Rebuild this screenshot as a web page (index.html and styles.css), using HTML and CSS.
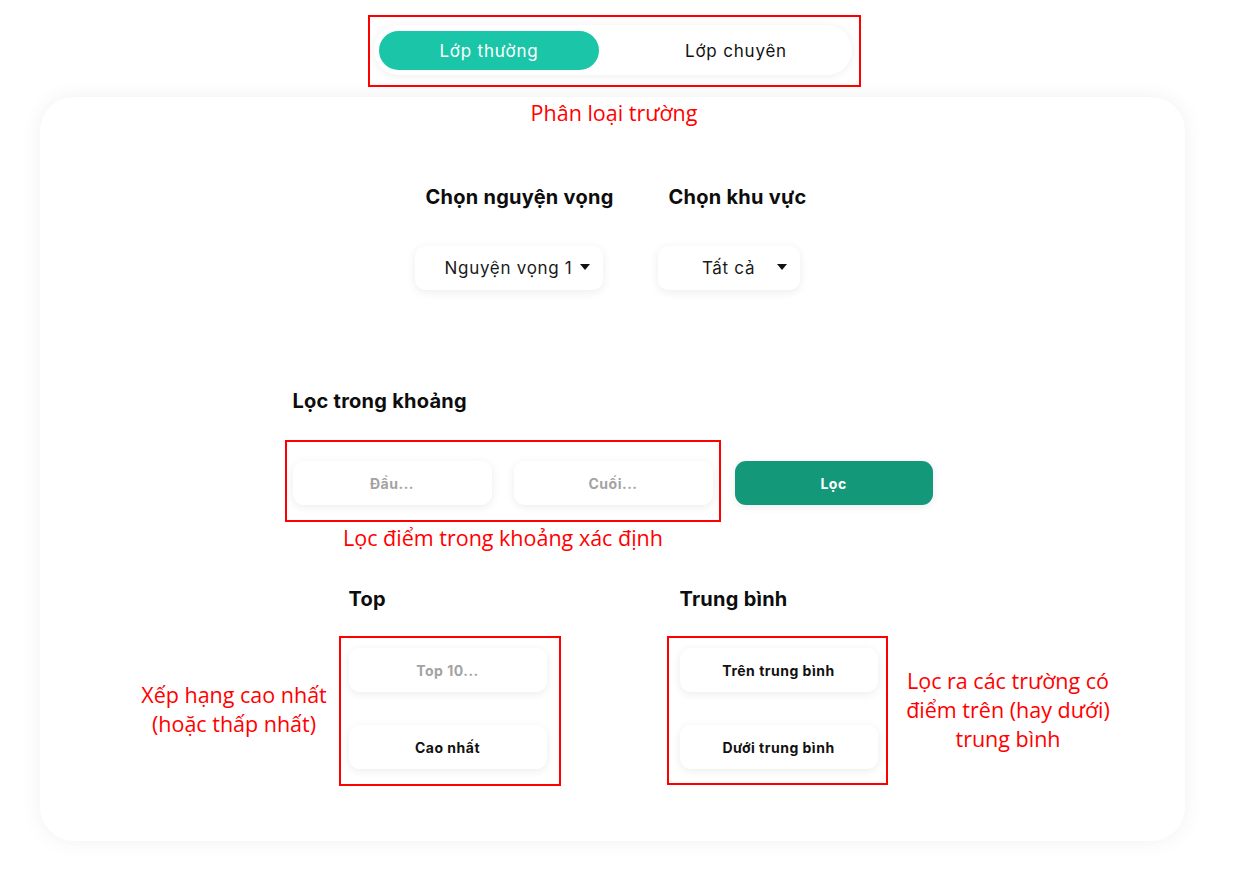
FILE: index.html
```html
<!DOCTYPE html>
<html lang="vi">
<head>
<meta charset="utf-8">
<title>Lọc trường</title>
<link rel="stylesheet" href="styles.css">
</head>
<body>
<div class="page">
  <div class="toggle-wrap">
    <div class="toggle">
      <button class="tab tab-active">Lớp thường</button>
      <button class="tab">Lớp chuyên</button>
    </div>
  </div>

  <div class="card">
    <div class="selects">
      <div class="field">
        <h3 class="title title-indent">Chọn nguyện vọng</h3>
        <div class="select select-wide"><span>Nguyện vọng 1</span><i class="caret"></i></div>
      </div>
      <div class="field">
        <h3 class="title title-indent">Chọn khu vực</h3>
        <div class="select select-narrow"><span>Tất cả</span><i class="caret"></i></div>
      </div>
    </div>

    <div class="range">
      <h3 class="title">Lọc trong khoảng</h3>
      <div class="range-row">
        <div class="box box-ph">Đầu...</div>
        <div class="box box-ph">Cuối...</div>
        <button class="box btn-green">Lọc</button>
      </div>
    </div>

    <div class="groups">
      <div class="group">
        <h3 class="title">Top</h3>
        <div class="box box-ph">Top 10...</div>
        <button class="box box-btn">Cao nhất</button>
      </div>
      <div class="group">
        <h3 class="title">Trung bình</h3>
        <button class="box box-btn">Trên trung bình</button>
        <button class="box box-btn">Dưới trung bình</button>
      </div>
    </div>
  </div>

  <div class="mark mark-toggle"></div>
  <div class="note note-toggle">Phân loại trường</div>
  <div class="mark mark-range"></div>
  <div class="note note-range">Lọc điểm trong khoảng xác định</div>
  <div class="mark mark-top"></div>
  <div class="note note-top">Xếp hạng cao nhất<br>(hoặc thấp nhất)</div>
  <div class="mark mark-avg"></div>
  <div class="note note-avg">Lọc ra các trường có<br>điểm trên (hay dưới)<br>trung bình</div>
</div>
</body>
</html>
```

FILE: styles.css
```css
* { box-sizing: border-box; }
html, body { margin: 0; padding: 0; background: #fff; }
body { font-family: Inter, "Noto Sans", sans-serif; color: #111; }

.page {
  position: relative;
  width: 1238px;
  min-height: 877px;
  padding-top: 25px;
}

.toggle-wrap { display: flex; justify-content: center; padding-right: 12px; }
.toggle {
  width: 478px;
  height: 50px;
  padding: 6px 6px 5px 5px;
  border-radius: 25px;
  background: #fff;
  box-shadow: 0 1px 10px rgba(0,0,0,0.07);
  display: flex;
  justify-content: space-between;
  align-items: center;
}
.tab {
  width: 220px;
  height: 39px;
  border: 0;
  border-radius: 20px;
  background: transparent;
  font-family: Inter, "Noto Sans", sans-serif;
  font-size: 17px;
  letter-spacing: 0.8px;
  color: #111;
  padding: 0;
  cursor: pointer;
}
.tab-active { background: #1bc6a8; color: #fff; }

.card {
  margin: 22px 53px 0 40px;
  height: 744px;
  border-radius: 34px;
  background: #fff;
  box-shadow: 0 0 22px rgba(0,0,0,0.06);
  padding-top: 88px;
  display: flex;
  flex-direction: column;
  align-items: center;
}

.title {
  margin: 0;
  font-size: 20px;
  line-height: 24px;
  letter-spacing: 0.25px;
  font-weight: 700;
  color: #0d0d0d;
}
.title-indent { padding-left: 11px; }

.selects { display: flex; gap: 44px; padding-right: 4px; }
.field { display: flex; flex-direction: column; gap: 37px; }
.select {
  position: relative;
  height: 44px;
  border-radius: 10px;
  background: #fff;
  box-shadow: 0 2px 10px rgba(0,0,0,0.08);
  display: flex;
  align-items: center;
  justify-content: center;
  font-size: 17px;
  letter-spacing: 0.7px;
  color: #1a1a1a;
}
.select-wide { width: 188px; }
.select-narrow { width: 142px; }
.caret {
  position: absolute;
  right: 13px;
  top: 18px;
  width: 0; height: 0;
  border-left: 5px solid transparent;
  border-right: 5px solid transparent;
  border-top: 6px solid #111;
}

.range { margin-top: 99px; display: flex; flex-direction: column; gap: 48px; }
.range-row { display: flex; gap: 22px; }
.range-row .box { width: 199px; }
.range-row .btn-green { width: 198px; }

.box {
  height: 44px;
  border: 0;
  border-radius: 11px;
  background: #fff;
  box-shadow: 0 2px 10px rgba(0,0,0,0.08);
  display: flex;
  align-items: center;
  justify-content: center;
  font-family: Inter, "Noto Sans", sans-serif;
  font-size: 14px;
  letter-spacing: 0.5px;
  font-weight: 700;
  color: #111;
  padding: 0;
}
.box-ph { color: #a3a3a3; }
.btn-green { background: #13997a; color: #fff; box-shadow: 0 2px 8px rgba(0,0,0,0.08); }

.groups { margin-top: 82px; display: flex; gap: 133px; padding-left: 1px; }
.group { width: 198px; display: flex; flex-direction: column; }
.group .title { margin-bottom: 37px; }
.group .box + .box { margin-top: 33px; }

.mark { position: absolute; border: 2px solid #f00; }
.mark-toggle { left: 368px; top: 15px; width: 493px; height: 72px; }
.mark-range { left: 285px; top: 440px; width: 436px; height: 82px; }
.mark-top { left: 339px; top: 636px; width: 222px; height: 150px; }
.mark-avg { left: 667px; top: 636px; width: 221px; height: 149px; }

.note {
  position: absolute;
  font-family: "Open Sans", "Noto Sans", sans-serif;
  font-size: 21.5px;
  line-height: 29px;
  color: #f00;
  text-align: center;
  white-space: nowrap;
}
.note-toggle { left: 464px; width: 300px; top: 98px; }
.note-range { left: 303px; width: 400px; top: 523px; }
.note-top { left: 84px; width: 300px; top: 680px; }
.note-avg { left: 858px; width: 300px; top: 666px; }
```
